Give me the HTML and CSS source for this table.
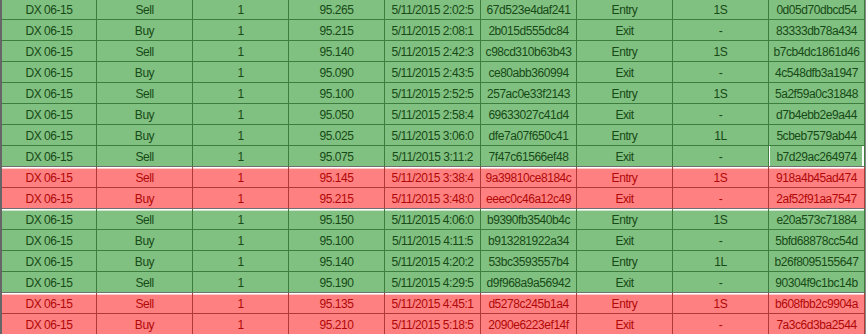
FILE: index.html
```html
<!DOCTYPE html>
<html>
<head>
<meta charset="utf-8">
<link rel="stylesheet" href="styles.css">
</head>
<body>
<div class="grid">
  <div class="row g"><span>DX 06-15</span><span>Sell</span><span>1</span><span>95.265</span><span>5/11/2015 2:02:5</span><span>67d523e4daf241</span><span>Entry</span><span>1S</span><span>0d05d70dbcd54</span></div>
  <div class="row g"><span>DX 06-15</span><span>Buy</span><span>1</span><span>95.215</span><span>5/11/2015 2:08:1</span><span>2b015d555dc84</span><span>Exit</span><span>-</span><span>83333db78a434</span></div>
  <div class="row g"><span>DX 06-15</span><span>Sell</span><span>1</span><span>95.140</span><span>5/11/2015 2:42:3</span><span>c98cd310b63b43</span><span>Entry</span><span>1S</span><span>b7cb4dc1861d46</span></div>
  <div class="row g"><span>DX 06-15</span><span>Buy</span><span>1</span><span>95.090</span><span>5/11/2015 2:43:5</span><span>ce80abb360994</span><span>Exit</span><span>-</span><span>4c548dfb3a1947</span></div>
  <div class="row g"><span>DX 06-15</span><span>Sell</span><span>1</span><span>95.100</span><span>5/11/2015 2:52:5</span><span>257ac0e33f2143</span><span>Entry</span><span>1S</span><span>5a2f59a0c31848</span></div>
  <div class="row g"><span>DX 06-15</span><span>Buy</span><span>1</span><span>95.050</span><span>5/11/2015 2:58:4</span><span>69633027c41d4</span><span>Exit</span><span>-</span><span>d7b4ebb2e9a44</span></div>
  <div class="row g"><span>DX 06-15</span><span>Buy</span><span>1</span><span>95.025</span><span>5/11/2015 3:06:0</span><span>dfe7a07f650c41</span><span>Entry</span><span>1L</span><span>5cbeb7579ab44</span></div>
  <div class="row g end"><span>DX 06-15</span><span>Sell</span><span>1</span><span>95.075</span><span>5/11/2015 3:11:2</span><span>7f47c61566ef48</span><span>Exit</span><span>-</span><span class="sel">b7d29ac264974</span></div>
  <div class="row r start"><span>DX 06-15</span><span>Sell</span><span>1</span><span>95.145</span><span>5/11/2015 3:38:4</span><span>9a39810ce8184c</span><span>Entry</span><span>1S</span><span>918a4b45ad474</span></div>
  <div class="row r end"><span>DX 06-15</span><span>Buy</span><span>1</span><span>95.215</span><span>5/11/2015 3:48:0</span><span>eeec0c46a12c49</span><span>Exit</span><span>-</span><span>2af52f91aa7547</span></div>
  <div class="row g start"><span>DX 06-15</span><span>Sell</span><span>1</span><span>95.150</span><span>5/11/2015 4:06:0</span><span>b9390fb3540b4c</span><span>Entry</span><span>1S</span><span>e20a573c71884</span></div>
  <div class="row g"><span>DX 06-15</span><span>Buy</span><span>1</span><span>95.100</span><span>5/11/2015 4:11:5</span><span>b913281922a34</span><span>Exit</span><span>-</span><span>5bfd68878cc54d</span></div>
  <div class="row g"><span>DX 06-15</span><span>Buy</span><span>1</span><span>95.140</span><span>5/11/2015 4:20:2</span><span>53bc3593557b4</span><span>Entry</span><span>1L</span><span>b26f8095155647</span></div>
  <div class="row g end"><span>DX 06-15</span><span>Sell</span><span>1</span><span>95.190</span><span>5/11/2015 4:29:5</span><span>d9f968a9a56942</span><span>Exit</span><span>-</span><span>90304f9c1bc14b</span></div>
  <div class="row r start"><span>DX 06-15</span><span>Sell</span><span>1</span><span>95.135</span><span>5/11/2015 4:45:1</span><span>d5278c245b1a4</span><span>Entry</span><span>1S</span><span>b608fbb2c9904a</span></div>
  <div class="row r"><span>DX 06-15</span><span>Buy</span><span>1</span><span>95.210</span><span>5/11/2015 5:18:5</span><span>2090e6223ef14f</span><span>Exit</span><span>-</span><span>7a3c6d3ba2544</span></div>
</div>
</body>
</html>
```

FILE: styles.css
```css
html, body {
  margin: 0;
  padding: 0;
  background: #ffffff;
  overflow: hidden;
}

.grid {
  width: 866px;
  box-sizing: border-box;
  border-left: 2px solid #666666;
  border-right: 1px solid #8a8a8a;
  margin-top: -1px;
  font-family: "Liberation Sans", Arial, sans-serif;
  font-size: 12px;
  letter-spacing: -0.45px;
}

.row {
  display: grid;
  grid-template-columns: 95px repeat(8, 96px);
  height: 21px;
}

.row span {
  box-sizing: border-box;
  height: 21px;
  line-height: 21px;
  padding-top: 1px;
  text-align: center;
  white-space: nowrap;
  overflow: hidden;
}

.row.g span {
  background: #80c080;
  color: #174a17;
  border-right: 1px solid #3d7d3d;
  border-bottom: 1px solid #3d7d3d;
}

.row.r span {
  background: #ff8080;
  color: #b00808;
  border-right: 1px solid #b03a3a;
  border-bottom: 1px solid #b03a3a;
}

.row.end span {
  border-bottom-color: #6f6f6f;
}

.row.start span {
  box-shadow: inset 0 1px 0 #ffffff, inset 0 2px 0 rgba(255,255,255,0.6);
}

.row span.sel {
  box-shadow: inset 1px 0 0 #ffffff, inset -2px 0 0 #ffffff;
}
```
